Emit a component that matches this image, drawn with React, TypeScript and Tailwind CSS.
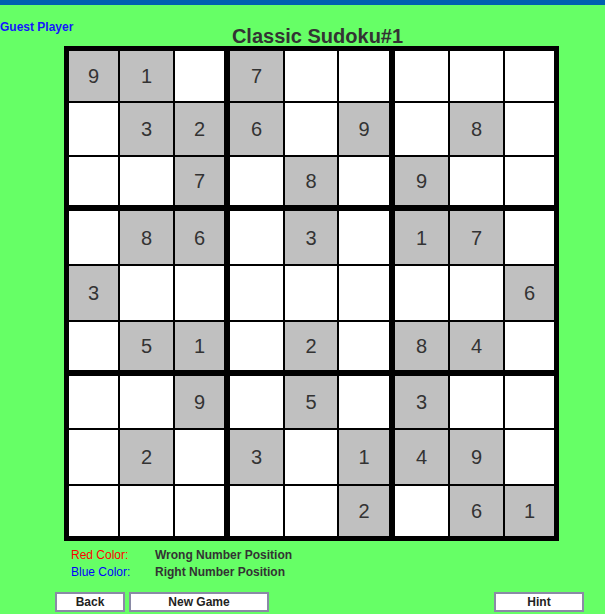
import React from "react";

const BOARD: (number | null)[][] = [
  [9, 1, null, 7, null, null, null, null, null],
  [null, 3, 2, 6, null, 9, null, 8, null],
  [null, null, 7, null, 8, null, 9, null, null],
  [null, 8, 6, null, 3, null, 1, 7, null],
  [3, null, null, null, null, null, null, null, 6],
  [null, 5, 1, null, 2, null, 8, 4, null],
  [null, null, 9, null, 5, null, 3, null, null],
  [null, 2, null, 3, null, 1, 4, 9, null],
  [null, null, null, null, null, 2, null, 6, 1],
];

const COL_W = [
  "w-[49px]",
  "w-[53px]",
  "w-[49px]",
  "w-[53px]",
  "w-[52px]",
  "w-[50px]",
  "w-[53px]",
  "w-[53px]",
  "w-[49px]",
];

const ROW_H = [
  "h-[50px]",
  "h-[52px]",
  "h-[48px]",
  "h-[53px]",
  "h-[54px]",
  "h-[48px]",
  "h-[52px]",
  "h-[54px]",
  "h-[50px]",
];

function Cell({ r, c }: { r: number; c: number }) {
  const v = BOARD[r][c];
  return (
    <div
      className={`${COL_W[c]} ${ROW_H[r]} flex items-center justify-center text-[20px] leading-none text-[#333333] ${
        v !== null ? "bg-[#c0c0c0]" : "bg-white"
      }`}
    >
      {v !== null ? v : ""}
    </div>
  );
}

function Row({ r }: { r: number }) {
  return (
    <div className="flex gap-[6px]">
      {[0, 1, 2].map((g) => (
        <div key={g} className="flex gap-[2px]">
          {[0, 1, 2].map((k) => (
            <Cell key={k} r={r} c={g * 3 + k} />
          ))}
        </div>
      ))}
    </div>
  );
}

export default function App() {
  return (
    <div className="w-[605px] h-[614px] bg-[#66ff66] font-['Liberation_Sans',Arial,sans-serif] overflow-hidden">
      <div className="h-[5px] bg-[#0060b0]" />
      <div className="flex items-start h-[41px]">
        <div className="w-[30px] shrink-0 whitespace-nowrap mt-[15px] text-[12px] leading-[14px] font-bold text-[#1414ff]">
          Guest Player
        </div>
        <div className="flex-1 text-center mt-[21px] text-[20px] leading-[20px] font-bold text-[#333333]">
          Classic Sudoku#1
        </div>
      </div>

      <div className="ml-[64px] w-fit flex flex-col gap-[6px] bg-black p-[5px]">
        {[0, 1, 2].map((b) => (
          <div key={b} className="flex flex-col gap-[2px]">
            {[0, 1, 2].map((k) => (
              <Row key={k} r={b * 3 + k} />
            ))}
          </div>
        ))}
      </div>

      <div className="mt-[6px] ml-[71px] text-[12px] leading-[17px]">
        <div className="flex">
          <span className="w-[84px] text-[#ff0000]">Red Color:</span>
          <span className="font-bold text-[#333333]">Wrong Number Position</span>
        </div>
        <div className="flex">
          <span className="w-[84px] text-[#0000ff]">Blue Color:</span>
          <span className="font-bold text-[#333333]">Right Number Position</span>
        </div>
      </div>

      <div className="mt-[11px] flex ml-[55px]">
        <button className="w-[70px] h-[20px] border-2 border-[#8a8aa6] bg-white text-[12px] leading-[16px] font-bold text-[#222222]">
          Back
        </button>
        <button className="ml-[4px] w-[140px] h-[20px] border-2 border-[#8a8aa6] bg-white text-[12px] leading-[16px] font-bold text-[#222222]">
          New Game
        </button>
        <button className="ml-[225px] w-[90px] h-[20px] border-2 border-[#8a8aa6] bg-white text-[12px] leading-[16px] font-bold text-[#222222]">
          Hint
        </button>
      </div>
    </div>
  );
}
